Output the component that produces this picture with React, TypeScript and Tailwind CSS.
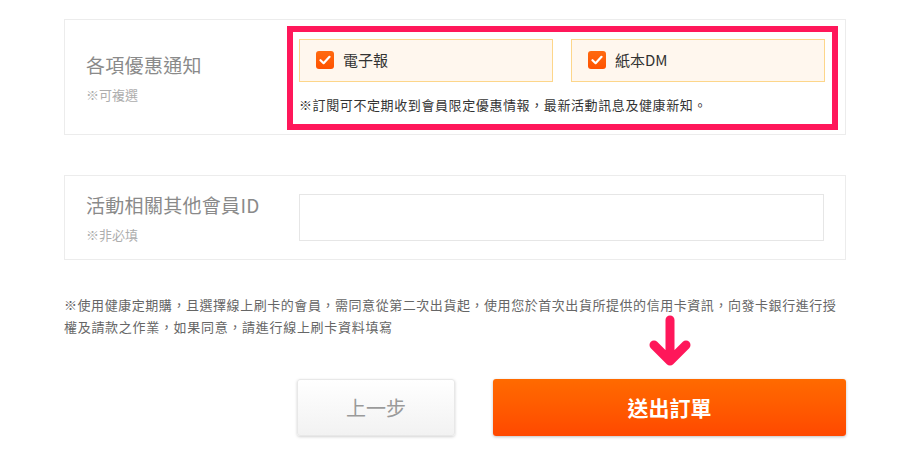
import React from "react";

const font = { fontFamily: '"Noto Sans CJK TC", "Noto Sans", sans-serif' };

function Check() {
  return (
    <span className="flex h-[18px] w-[18px] items-center justify-center rounded-[3px] bg-gradient-to-b from-[#ff6a10] to-[#ff5200]">
      <svg width="12" height="10" viewBox="0 0 12 10" fill="none">
        <path d="M1.5 5.2 L4.6 8.2 L10.5 1.8" stroke="#fff" strokeWidth="2.2" strokeLinecap="round" strokeLinejoin="round" />
      </svg>
    </span>
  );
}

function Option({ label }: { label: string }) {
  return (
    <div className="flex h-[43px] w-[254px] items-center gap-[9px] border border-[#fdd68a] bg-[#fff7ee] pl-[16px]">
      <Check />
      <span className="text-[15px] text-[#333]">{label}</span>
    </div>
  );
}

export default function App() {
  return (
    <div className="min-h-[475px] bg-white pt-[19px]" style={font}>
      <div className="ml-[64px] w-[782px]">
        {/* Card 1 */}
        <div className="flex h-[116px] items-center border border-[#ececec] pb-[4px] pt-[5px]">
          <div className="w-[222px] pl-[21px]">
            <div className="text-[19px] leading-[26px] tracking-[0.3px] text-[#8a8a8a]">各項優惠通知</div>
            <div className="mt-[8px] text-[13px] leading-[17px] text-[#adadad]">※可複選</div>
          </div>
          <div className="w-[551px] border-[6px] border-[#ff175a] pb-[9px] pl-[6px] pr-[7px] pt-[7px]">
            <div className="flex gap-[18px]">
              <Option label="電子報" />
              <Option label="紙本DM" />
            </div>
            <div className="mt-[13px] text-[13px] leading-[20px] tracking-[0.6px] text-[#333]">
              ※訂閱可不定期收到會員限定優惠情報，最新活動訊息及健康新知。
            </div>
          </div>
        </div>

        {/* Card 2 */}
        <div className="mt-[40px] flex h-[85px] items-center border border-[#ececec]">
          <div className="w-[234px] pl-[21px]">
            <div className="text-[19px] leading-[26px] tracking-[0.3px] text-[#8a8a8a]">活動相關其他會員ID</div>
            <div className="mt-[8px] text-[13px] leading-[17px] text-[#adadad]">※非必填</div>
          </div>
          <input className="h-[47px] w-[525px] border border-[#e6e6e6] bg-white px-3 outline-none" />
        </div>

        {/* Disclaimer */}
        <div className="mt-[34px] text-[13px] leading-[22px] text-[#666]">
          <div className="whitespace-nowrap tracking-[0.55px]">
            ※使用健康定期購，且選擇線上刷卡的會員，需同意從第二次出貨起，使用您於首次出貨所提供的信用卡資訊，向發卡銀行進行授
          </div>
          <div className="tracking-[0.7px]">權及請款之作業，如果同意，請進行線上刷卡資料填寫</div>
        </div>

        {/* Buttons */}
        <div className="mt-[41px] flex justify-end gap-[38px]">
          <button className="h-[57px] w-[158px] rounded-[3px] border border-[#e8e8e8] bg-gradient-to-b from-white to-[#f2f2f2] text-[20px] text-[#9a9a9a] shadow-[0_1px_3px_rgba(0,0,0,0.18)]">
            上一步
          </button>
          <div className="relative">
            <svg className="absolute left-[156px] top-[-64px]" width="42" height="54" viewBox="0 0 42 54" fill="none">
              <path d="M21 5 L21 44 M5 30 L21 46 L37 30" stroke="#ff175a" strokeWidth="9" strokeLinecap="round" strokeLinejoin="round" />
            </svg>
            <button className="h-[57px] w-[353px] rounded-[3px] bg-gradient-to-b from-[#ff6a00] to-[#ff4800] text-[21px] font-bold text-white shadow-[0_1px_3px_rgba(0,0,0,0.25)]">
              送出訂單
            </button>
          </div>
        </div>
      </div>
    </div>
  );
}
